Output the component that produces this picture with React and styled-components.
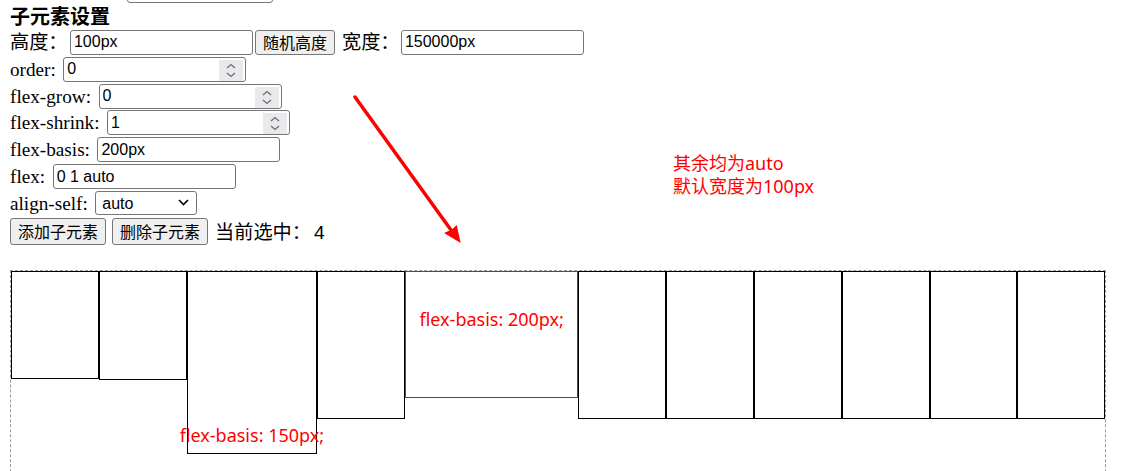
import React from 'react'
import styled, { createGlobalStyle } from 'styled-components'

const GlobalStyle = createGlobalStyle`
  html, body {
    margin: 0;
    padding: 0;
    overflow: hidden;
    background: #fff;
  }
  body {
    font-family: "Liberation Serif", "Noto Sans CJK SC", serif;
    font-size: 19.2px;
    color: #000;
  }
`

const Page = styled.div`
  position: relative;
  height: 471px;
  overflow: hidden;
  padding: 0 17px 0 10px;
`

const Row = styled.div`
  display: flex;
  align-items: flex-start;
  height: 26.86px;
  white-space: nowrap;
  margin-top: ${p => p.$offset || 0}px;
`

const Title = styled.h3`
  margin: 0;
  height: 26.86px;
  line-height: 26.86px;
  font-family: "Noto Sans CJK SC", sans-serif;
  font-size: 20px;
  font-weight: bold;
`

const Label = styled.span`
  line-height: 25px;
  margin-left: ${p => p.$lead || 0}px;
  margin-right: ${p => (p.$space === undefined ? 7.5 : p.$space)}px;
`

const TextInput = styled.input`
  box-sizing: border-box;
  width: ${p => p.$w || 183}px;
  height: 25px;
  margin: 0;
  padding: 0 3px;
  border: 1px solid #767676;
  border-radius: 3px;
  background: #fff;
  color: #000;
  font: 16px "Liberation Sans", sans-serif;
  outline: none;
`

const NumberBox = styled.div`
  box-sizing: border-box;
  display: flex;
  width: 183px;
  height: 25px;
  padding: 2px 2px 0 0;
  border: 1px solid #767676;
  border-radius: 3px;
  background: #fff;

  & > input {
    flex: 1;
    min-width: 0;
    border: 0;
    padding: 0 0 0 3px;
    margin: -2px 0 0 0;
    font: 16px "Liberation Sans", sans-serif;
    color: #000;
    background: transparent;
    outline: none;
  }
`

const Spinner = styled.span`
  display: block;
  width: 24px;
  background: #e9e9ed;
`

const SelectWrap = styled.div`
  position: relative;
  width: ${p => p.$w || 102}px;
  height: 24px;
  margin-left: ${p => p.$lead || 0}px;
  margin-top: ${p => p.$top || 0}px;

  & > svg {
    position: absolute;
    right: 8px;
    top: 8px;
    pointer-events: none;
  }
`

const Select = styled.select`
  box-sizing: border-box;
  appearance: none;
  width: 100%;
  height: 100%;
  margin: 0;
  padding: 0 0 0 6px;
  border: 1px solid #767676;
  border-radius: 3px;
  background: #fff;
  color: #000;
  font: 16px "Liberation Sans", sans-serif;
`

const Button = styled.button`
  box-sizing: border-box;
  height: ${p => p.$h || 25}px;
  margin: 0 0 0 ${p => p.$lead || 0}px;
  padding: 0 7px;
  border: 1px solid #767676;
  border-radius: 3px;
  background: #efefef;
  color: #000;
  font: 16px "Noto Sans CJK SC", sans-serif;
  line-height: 1;
`

const Status = styled.span`
  margin-left: 7px;
  line-height: 27px;
  font-family: "Noto Sans CJK SC", sans-serif;

  & > b {
    font-weight: normal;
    margin-left: 3px;
    font-family: "Liberation Sans", sans-serif;
  }
`

const FlexArea = styled.div`
  display: flex;
  align-items: flex-start;
  margin-top: 25px;
  height: 240px;
  border: 1px dashed #999;
`

const Item = styled.div`
  display: flex;
  justify-content: center;
  align-items: flex-start;
  flex: 0 1 ${p => p.$basis || 100}px;
  min-width: 0;
  height: ${p => p.$h}px;
  border: 1px solid ${p => (p.$active ? '#f00' : '#000')};
`

const ItemNote = styled.span`
  padding-top: ${p => p.$top}px;
  white-space: nowrap;
  color: #f00;
  font: 18px/24px "Noto Sans", "Noto Sans CJK SC", sans-serif;
`

const Note = styled.div`
  position: absolute;
  left: 673px;
  top: 152px;
  color: #f00;
  font: 18px/23px "Noto Sans", "Noto Sans CJK SC", sans-serif;
`

const Arrow = styled.svg`
  position: absolute;
  left: 350px;
  top: 92px;
`

const Chevrons = () => (
  <svg width="24" height="21" viewBox="0 0 24 21">
    <path d="M8 8 L12 4.5 L16 8" fill="none" stroke="#6f6f6f" strokeWidth="1.3" />
    <path d="M8 13 L12 16.5 L16 13" fill="none" stroke="#6f6f6f" strokeWidth="1.3" />
  </svg>
)

const NumberField = ({ value }) => (
  <NumberBox>
    <input type="text" defaultValue={value} />
    <Spinner><Chevrons /></Spinner>
  </NumberBox>
)

const items = [
  { h: 106 },
  { h: 107 },
  { h: 181, basis: 150, note: 'flex-basis: 150px;', top: 151 },
  { h: 146 },
  { h: 125, basis: 200, note: 'flex-basis: 200px;', top: 35 },
  { h: 146 },
  { h: 146 },
  { h: 146 },
  { h: 146 },
  { h: 146 },
  { h: 146 },
]

const selected = 4

export default function App() {
  return (
    <Page>
      <GlobalStyle />

      {/* previous (container) row, scrolled mostly out of view */}
      <Row $offset={-23.86}>
        <SelectWrap $w={146} $lead={117} $top={2.6}>
          <Select defaultValue="" aria-label="flex-direction">
            <option value=""></option>
          </Select>
        </SelectWrap>
      </Row>

      <Title>子元素设置</Title>

      <Row>
        <Label $space={2.4}>高度：</Label>
        <TextInput defaultValue="100px" />
        <Button $lead={2}>随机高度</Button>
        <Label $lead={7} $space={1.4}>宽度：</Label>
        <TextInput defaultValue="150000px" />
      </Row>

      <Row>
        <Label>order:</Label>
        <NumberField value="0" />
      </Row>

      <Row>
        <Label>flex-grow:</Label>
        <NumberField value="0" />
      </Row>

      <Row>
        <Label>flex-shrink:</Label>
        <NumberField value="1" />
      </Row>

      <Row>
        <Label>flex-basis:</Label>
        <TextInput defaultValue="200px" />
      </Row>

      <Row>
        <Label>flex:</Label>
        <TextInput defaultValue="0 1 auto" />
      </Row>

      <Row>
        <Label>align-self:</Label>
        <SelectWrap>
          <Select defaultValue="auto">
            <option value="auto">auto</option>
            <option value="flex-start">flex-start</option>
            <option value="center">center</option>
          </Select>
          <svg width="11" height="7" viewBox="0 0 11 7">
            <path d="M1 1 L5.5 5.5 L10 1" fill="none" stroke="#000" strokeWidth="1.6" />
          </svg>
        </SelectWrap>
      </Row>

      <Row>
        <Button $h={27}>添加子元素</Button>
        <Button $h={27} $lead={6}>删除子元素</Button>
        <Status>当前选中：<b>{selected}</b></Status>
      </Row>

      <FlexArea>
        {items.map((it, i) => (
          <Item key={i} $h={it.h} $basis={it.basis} $active={i === selected}>
            {it.note && <ItemNote $top={it.top}>{it.note}</ItemNote>}
          </Item>
        ))}
      </FlexArea>

      <Arrow width="120" height="160" viewBox="0 0 120 160">
        <line x1="5" y1="5" x2="101" y2="138" stroke="#f00" strokeWidth="3.5" strokeLinecap="round" />
        <polygon points="110.7,151 94,141 102,137.5 106.7,133" fill="#f00" />
      </Arrow>

      <Note>
        其余均为auto<br />
        默认宽度为100px
      </Note>
    </Page>
  )
}
